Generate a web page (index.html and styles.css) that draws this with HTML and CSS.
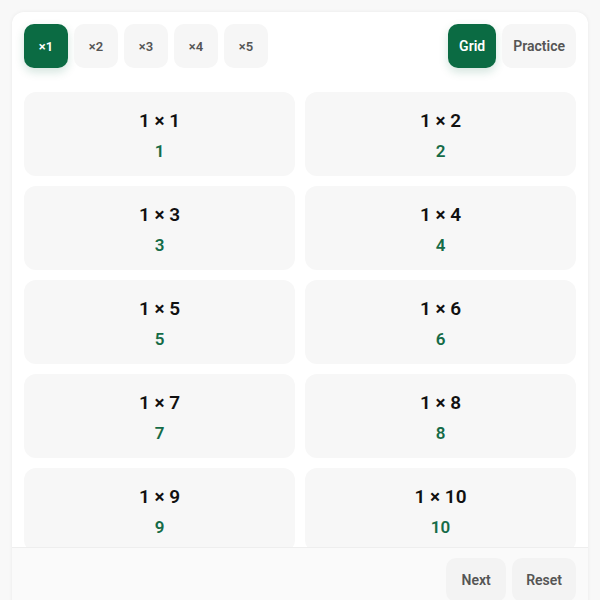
FILE: index.html
```html
<!DOCTYPE html>
<html>
<head>
<meta charset="utf-8">
<link rel="stylesheet" href="styles.css">
</head>
<body>
<div class="app">
  <div class="toolbar">
    <div class="tables">
      <button class="btn sq active">×1</button>
      <button class="btn sq">×2</button>
      <button class="btn sq">×3</button>
      <button class="btn sq">×4</button>
      <button class="btn sq">×5</button>
    </div>
    <div class="modes">
      <button class="btn active">Grid</button>
      <button class="btn">Practice</button>
    </div>
  </div>
  <div class="grid-wrap">
    <div class="grid">
      <div class="card"><div class="q">1 × 1</div><div class="a">1</div></div>
      <div class="card"><div class="q">1 × 2</div><div class="a">2</div></div>
      <div class="card"><div class="q">1 × 3</div><div class="a">3</div></div>
      <div class="card"><div class="q">1 × 4</div><div class="a">4</div></div>
      <div class="card"><div class="q">1 × 5</div><div class="a">5</div></div>
      <div class="card"><div class="q">1 × 6</div><div class="a">6</div></div>
      <div class="card"><div class="q">1 × 7</div><div class="a">7</div></div>
      <div class="card"><div class="q">1 × 8</div><div class="a">8</div></div>
      <div class="card"><div class="q">1 × 9</div><div class="a">9</div></div>
      <div class="card"><div class="q">1 × 10</div><div class="a">10</div></div>
    </div>
  </div>
  <div class="footer">
    <button class="btn fbtn">Next</button>
    <button class="btn fbtn">Reset</button>
  </div>
</div>
</body>
</html>
```
FILE: styles.css
```css
* { box-sizing: border-box; }
html, body { margin: 0; padding: 0; }
body {
  background: #f8f8f8;
  font-family: Roboto, "Liberation Sans", sans-serif;
  color: #111;
  padding: 12px;
}
.app {
  height: 600px;
  background: #fff;
  border-radius: 12px;
  box-shadow: 0 0 4px rgba(0,0,0,0.06);
  display: flex;
  flex-direction: column;
  overflow: hidden;
}
.toolbar {
  display: flex;
  justify-content: space-between;
  padding: 12px;
}
.tables, .modes { display: flex; gap: 6px; }
.btn {
  height: 44px;
  border: none;
  border-radius: 10px;
  background: #f6f6f6;
  color: #555;
  font-family: Roboto, "Liberation Sans", sans-serif;
  font-size: 14px;
  font-weight: 600;
  padding: 0 11px;
  cursor: pointer;
}
.btn.sq { width: 44px; padding: 0; font-size: 13px; }
.btn.active {
  background: #0b6b43;
  color: #fff;
  box-shadow: 0 4px 10px rgba(11,107,67,0.18);
}
.grid-wrap {
  flex: 1;
  overflow: hidden;
  padding: 12px 12px 0 12px;
}
.grid {
  display: grid;
  grid-template-columns: 1fr 1fr;
  grid-auto-rows: 84px;
  gap: 10px;
}
.card {
  background: #f7f7f7;
  border-radius: 12px;
  display: flex;
  flex-direction: column;
  align-items: center;
  justify-content: center;
  gap: 7px;
  padding-top: 3px;
}
.q {
  font-size: 19px;
  font-weight: 600;
  line-height: 24px;
  color: #111;
}
.a {
  font-size: 17px;
  font-weight: 600;
  line-height: 22px;
  color: #156b47;
}
.footer {
  border-top: 1px solid #eeeeee;
  background: #fafafa;
  padding: 10px 12px;
  display: flex;
  justify-content: flex-end;
  gap: 6px;
}
.fbtn {
  background: #f3f3f3;
  padding: 0 14px;
  min-width: 60px;
}
```
